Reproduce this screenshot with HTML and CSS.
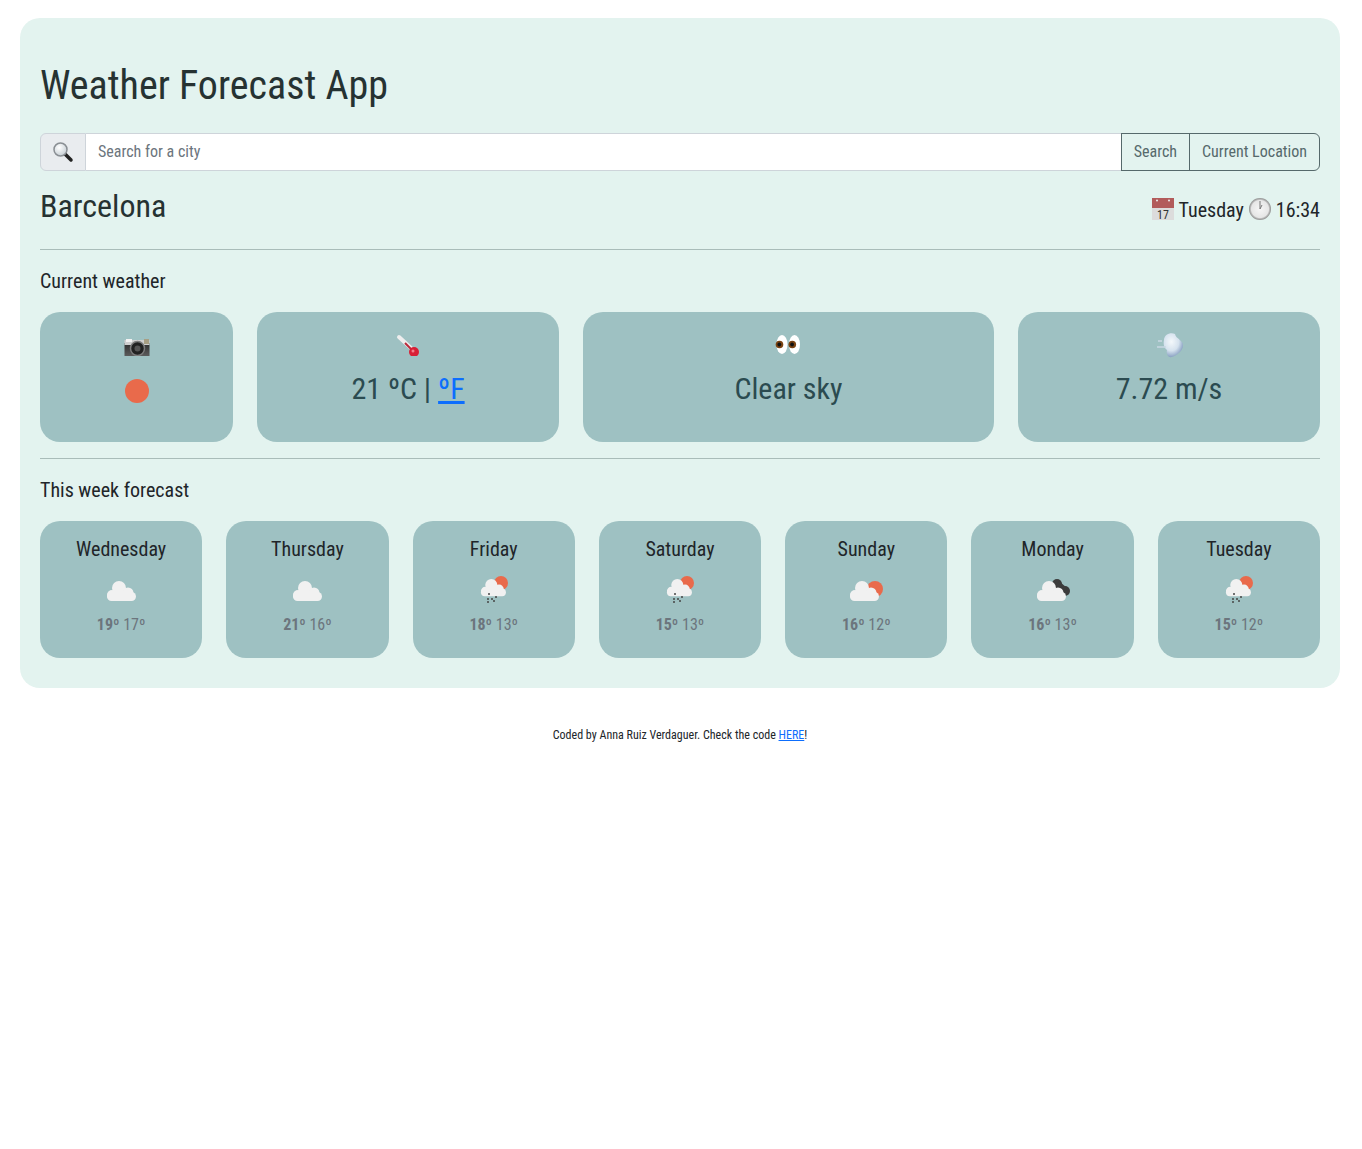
FILE: index.html
```html
<!doctype html>
<html lang="en">
<head>
	<meta charset="UTF-8">
	<title>Weather Forecast App</title>
	<link rel="stylesheet" href="styles.css">
</head>
<body>
	<svg class="defs" width="0" height="0">
		<defs>
			<g id="cloud" fill="#f1f1f1">
				<circle cx="15" cy="15" r="7"/>
				<circle cx="24" cy="20" r="5.500"/>
				<circle cx="8" cy="22" r="5"/>
				<rect x="3" y="19" width="29" height="9" rx="4.500"/>
			</g>
			<g id="rain" fill="#444">
				<circle cx="12" cy="21" r="1"/><circle cx="19" cy="24" r="1"/><circle cx="11" cy="26" r="1"/><circle cx="15" cy="26" r="1"/><circle cx="11" cy="29" r="1"/><circle cx="17" cy="28" r="1"/>
			</g>
			<g id="showers">
				<circle cx="24" cy="10" r="7" fill="#e96a4b"/>
				<use href="#cloud" transform="translate(1.400 -.900) scale(.86)"/>
				<use href="#rain"/>
			</g>
			<radialGradient id="lens" cx=".4" cy=".35" r=".7">
				<stop offset="0" stop-color="#ffffff"/>
				<stop offset="1" stop-color="#c3ccd2"/>
			</radialGradient>
			<radialGradient id="face" cx=".5" cy=".5" r=".5">
				<stop offset="0" stop-color="#f6f6f6"/>
				<stop offset=".78" stop-color="#e6e6e6"/>
				<stop offset=".88" stop-color="#b5b5b5"/>
				<stop offset="1" stop-color="#8f8f8f"/>
			</radialGradient>
			<linearGradient id="body" x1="0" y1="0" x2="0" y2="1">
				<stop offset="0" stop-color="#2e2e2e"/>
				<stop offset="1" stop-color="#5c5c5c"/>
			</linearGradient>
			<radialGradient id="puff" cx=".4" cy=".35" r=".7">
				<stop offset="0" stop-color="#f4f8fb"/>
				<stop offset=".55" stop-color="#d5e2ee"/>
				<stop offset="1" stop-color="#7b94ba"/>
			</radialGradient>
			<filter id="soft"><feGaussianBlur stdDeviation=".5"/></filter>
		</defs>
	</svg>
	<main class="app">
		<h1 class="title">Weather Forecast App</h1>
		<form class="search">
			<span class="search-icon">
				<svg width="22" height="22" viewBox="0 0 22 22"><path d="M13 13l6 6" stroke="#222" stroke-width="3.500" stroke-linecap="round"/><circle cx="8.500" cy="8.500" r="6.500" fill="url(#lens)" stroke="#8a8f94" stroke-width="1.500"/></svg>
			</span>
			<input class="search-input" type="text" placeholder="Search for a city">
			<button class="btn" type="button">Search</button>
			<button class="btn btn-last" type="button">Current Location</button>
		</form>
		<div class="place">
			<h2 class="city">Barcelona</h2>
			<div class="when">
				<svg width="24" height="24" viewBox="0 0 24 24"><rect x="2" y="1" width="22" height="22" fill="#dcdcdc"/><rect x="2" y="1" width="22" height="10" fill="#b25b5b"/><circle cx="7" cy="3.500" r="1" fill="#eee"/><circle cx="19" cy="3.500" r="1" fill="#eee"/><text x="13" y="21.500" font-size="12" text-anchor="middle" fill="#333" class="svg-text">17</text></svg>
				<span>Tuesday</span>
				<svg width="24" height="24" viewBox="0 0 24 24"><circle cx="12" cy="12" r="11" fill="url(#face)"/><path d="M12 12V4M12 12l2-4" stroke="#777" stroke-width="1"/></svg>
				<span>16:34</span>
			</div>
		</div>
		<hr class="rule">
		<h3 class="section">Current weather</h3>
		<div class="current">
			<div class="card">
				<svg class="emoji" width="28" height="24" viewBox="0 0 28 24"><rect x="1.500" y="11" width="25" height="13" fill="url(#body)"/><rect x="1.500" y="8" width="25" height="5" fill="#cfcfcf"/><rect x="3" y="7" width="6" height="3" fill="#f2f2f2"/><rect x="21" y="7" width="5" height="5" fill="#a89f84"/><circle cx="14.500" cy="16.500" r="7" fill="#222" stroke="#7c7c7c" stroke-width="1.500"/><circle cx="14.500" cy="16.500" r="3" fill="#555"/></svg>
				<svg class="sun" width="24" height="24" viewBox="0 0 24 24"><circle cx="12" cy="12" r="12" fill="#e96a4b"/></svg>
			</div>
			<div class="card">
				<svg class="emoji" width="28" height="24" viewBox="0 0 28 24"><path d="M5 5l13 12" stroke="#eee" stroke-width="4" stroke-linecap="round"/><path d="M11 11l8 8" stroke="#b9293a" stroke-width="2"/><circle cx="20" cy="20" r="5" fill="#d81f35"/><circle cx="19" cy="19" r="1.500" fill="#f27d8a"/></svg>
				<div class="value">21 ºC | <a href="#">ºF</a></div>
			</div>
			<div class="card">
				<svg class="emoji" width="28" height="24" viewBox="0 0 28 24"><ellipse cx="7" cy="12.500" rx="5.500" ry="9.500" fill="#fff"/><ellipse cx="19.500" cy="12.500" rx="5.500" ry="9.500" fill="#fff"/><circle cx="4.500" cy="12.500" r="3.800" fill="#7a4312"/><circle cx="17.300" cy="12.500" r="3.800" fill="#7a4312"/><circle cx="4.300" cy="12.500" r="1.900" fill="#111"/><circle cx="17.100" cy="12.500" r="1.900" fill="#111"/></svg>
				<div class="value">Clear sky</div>
			</div>
			<div class="card">
				<svg class="emoji" width="28" height="26" viewBox="0 0 28 26"><g filter="url(#soft)"><path d="M9 8c0-5 6-8 11-6 1 5 8 6 8 11 0 6-6 10-11 12-4 1-6-3-5-7-3-2-4-6-3-10z" fill="url(#puff)"/><path d="M3 9h4M2 15h9" stroke="#c9d9e3" stroke-width="1.500"/></g></svg>
				<div class="value value-wind">7.72 m/s</div>
			</div>
		</div>
		<hr class="rule rule-two">
		<h3 class="section">This week forecast</h3>
		<div class="week">
			<div class="day">
				<div class="day-name">Wednesday</div>
				<svg class="day-icon" width="34" height="34" viewBox="0 0 34 34"><use href="#cloud"/></svg>
				<div class="temps"><b>19º</b> 17º</div>
			</div>
			<div class="day">
				<div class="day-name">Thursday</div>
				<svg class="day-icon" width="34" height="34" viewBox="0 0 34 34"><use href="#cloud"/></svg>
				<div class="temps"><b>21º</b> 16º</div>
			</div>
			<div class="day">
				<div class="day-name">Friday</div>
				<svg class="day-icon" width="34" height="34" viewBox="0 0 34 34"><use href="#showers"/></svg>
				<div class="temps"><b>18º</b> 13º</div>
			</div>
			<div class="day">
				<div class="day-name">Saturday</div>
				<svg class="day-icon" width="34" height="34" viewBox="0 0 34 34"><use href="#showers"/></svg>
				<div class="temps"><b>15º</b> 13º</div>
			</div>
			<div class="day">
				<div class="day-name">Sunday</div>
				<svg class="day-icon" width="34" height="34" viewBox="0 0 34 34"><circle cx="26" cy="16" r="8" fill="#e96a4b"/><use href="#cloud" transform="translate(-2 0)"/></svg>
				<div class="temps"><b>16º</b> 12º</div>
			</div>
			<div class="day">
				<div class="day-name">Monday</div>
				<svg class="day-icon" width="34" height="34" viewBox="0 0 34 34"><circle cx="21" cy="11" r="5" fill="#3c3c3c"/><circle cx="29" cy="18" r="5" fill="#3c3c3c"/><path d="M21 11l8 7" stroke="#3c3c3c" stroke-width="7"/><use href="#cloud" transform="translate(-2 0)"/></svg>
				<div class="temps"><b>16º</b> 13º</div>
			</div>
			<div class="day">
				<div class="day-name">Tuesday</div>
				<svg class="day-icon" width="34" height="34" viewBox="0 0 34 34"><use href="#showers"/></svg>
				<div class="temps"><b>15º</b> 12º</div>
			</div>
		</div>
	</main>
	<footer class="credit">Coded by Anna Ruiz Verdaguer. Check the code <a href="#">HERE</a>!</footer>
</body>
</html>
```

FILE: styles.css
```css
*{
	box-sizing: border-box;
}
body{
	margin: 0;
	padding: 18px 22px 0 20px;
	font-family: "Roboto Condensed", Roboto, "Liberation Sans", sans-serif;
	font-stretch: 75%;
	color: #212529;
	background-color: white;
}
a{
	color: #0d6efd;
}
.defs{
	display: block;
	height: 0;
}
.svg-text{
	font-family: Roboto, sans-serif;
}
.app{
	background-color: #e3f3ef;
	border-radius: 20px;
	padding: 20px 20px 30px;
}
.title{
	margin: 24px 0 23px;
	font-size: 40px;
	line-height: 48px;
	font-weight: 400;
	color: #263232;
}
.search{
	display: flex;
	height: 38px;
	margin-bottom: 16px;
}
.search-icon{
	width: 46px;
	display: flex;
	align-items: center;
	justify-content: center;
	background-color: #e9ecef;
	border: 1px solid #ced4da;
	border-radius: 6px 0 0 6px;
}
.search-input{
	flex: 1;
	min-width: 0;
	padding: 0 12px 2px;
	border: 1px solid #ced4da;
	border-left: 0;
	font: inherit;
	font-stretch: 75%;
	font-size: 16px;
	outline: none;
}
.search-input::placeholder{
	color: #6c757d;
}
.btn{
	padding: 0 12px 2px;
	background: transparent;
	border: 1px solid #56696b;
	margin-left: -1px;
	font: inherit;
	font-stretch: 75%;
	font-size: 16px;
	color: #56696b;
}
.btn-last{
	border-radius: 0 6px 6px 0;
}
.place{
	display: flex;
	justify-content: space-between;
	align-items: flex-start;
}
.city{
	margin: 0;
	font-size: 32px;
	line-height: 38px;
	font-weight: 400;
	color: #263232;
}
.when{
	display: flex;
	align-items: center;
	gap: 4px;
	margin-top: 11px;
	font-size: 20px;
	line-height: 24px;
}
.when svg{
	margin-top: -2px;
}
.rule{
	margin: 24px 0 19px;
	border: 0;
	border-top: 1px solid #a9bcb9;
}
.rule-two{
	margin: 16px 0 19px;
}
.section{
	margin: 0 0 19px;
	font-size: 20px;
	line-height: 24px;
	font-weight: 400;
}
.current{
	display: grid;
	grid-template-columns: 193px 302px 411px 302px;
	gap: 24px;
}
.card{
	height: 130px;
	padding-top: 20px;
	display: flex;
	flex-direction: column;
	align-items: center;
	background-color: #9ec1c2;
	border-radius: 20px;
}
.emoji{
	display: block;
}
.sun{
	margin-top: 23px;
}
.value{
	margin-top: 15px;
	font-size: 30px;
	line-height: 36px;
	color: #2b4b50;
}
.value-wind{
	margin-top: 13px;
}
.week{
	display: grid;
	grid-template-columns: repeat(7, 1fr);
	gap: 24px;
}
.day{
	height: 137px;
	padding-top: 16px;
	display: flex;
	flex-direction: column;
	align-items: center;
	background-color: #9ec1c2;
	border-radius: 20px;
}
.day-name{
	font-size: 20px;
	line-height: 24px;
}
.day-icon{
	display: block;
	margin-top: 12px;
}
.temps{
	margin-top: 8px;
	font-size: 16px;
	line-height: 19px;
	color: #6c757d;
}
.temps b{
	font-weight: 700;
}
.credit{
	margin-top: 40px;
	text-align: center;
	font-size: 12px;
	line-height: 14px;
	color: #212529;
}
```
